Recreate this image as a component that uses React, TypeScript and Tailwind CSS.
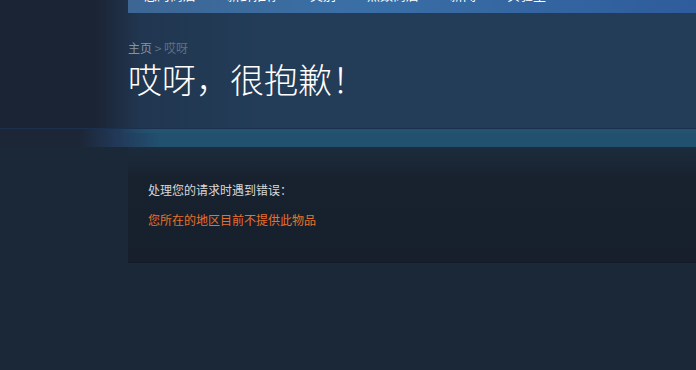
const NAV = ["您的商店", "新鲜推荐", "类别", "点数商店", "新闻", "实验室"];

export default function App() {
  return (
    <div
      className="w-[696px] h-[370px] overflow-hidden bg-[#1b2838]"
      style={{ fontFamily: '"Noto Sans CJK SC", "Noto Sans", Arial, sans-serif' }}
    >
      {/* header area */}
      <div className="h-[128px] bg-[linear-gradient(90deg,#1b2434_0px,#1b2434_95px,#213650_140px,#233c57_260px,#233d58_100%)]">
        <div className="ml-[128px] h-[13px] overflow-hidden bg-[linear-gradient(90deg,#3d6694_0%,#3a6fa6_40%,#2f5c9c_100%)]">
          <div className="flex mt-[-12px] pl-[16px] gap-[31px] text-[13px] leading-[13px] text-white">
            {NAV.map((item) => (
              <div key={item}>{item}</div>
            ))}
          </div>
        </div>
        <div className="pl-[128px] pt-[27px]">
          <div className="text-[12px] leading-[16px] text-[#8693a0]">
            主页 <span className="text-[#5d7186]">&gt; 哎呀</span>
          </div>
          <div className="mt-[3px] text-[34px] leading-[40px] font-light text-white">
            哎呀，很抱歉！
          </div>
        </div>
      </div>

      {/* blue band */}
      <div className="h-[19px] border-t border-[#1a304c] bg-[linear-gradient(90deg,#1c2637_0px,#1c2637_80px,#223a5a_120px,#22506f_160px,#22506f_100%)]">
        <div className="h-[4px] bg-[linear-gradient(90deg,transparent_0px,transparent_120px,#24536f_160px,#25536f_100%)]" />
      </div>

      {/* error box */}
      <div className="pl-[128px]">
        <div className="h-[116px] border-b border-[#131a25] bg-[linear-gradient(180deg,#1c2c3d_0px,#18222f_30px,#161f2b_100%)] px-[20px] pt-[35px] text-[12px] leading-[16px]">
          <div className="text-[#d6d9dc]">处理您的请求时遇到错误：</div>
          <div className="mt-[14px] text-[#e8712a]">您所在的地区目前不提供此物品</div>
        </div>
      </div>
    </div>
  );
}
